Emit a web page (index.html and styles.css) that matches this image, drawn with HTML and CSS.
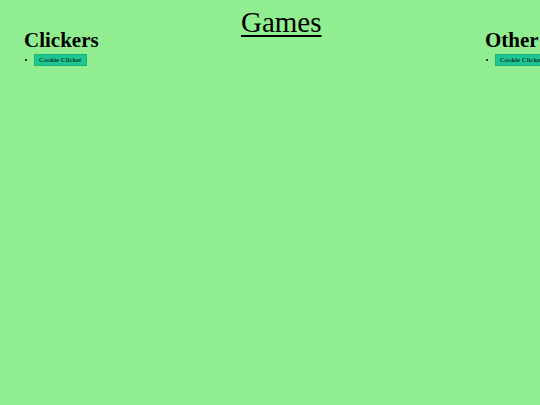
FILE: index.html
```html
<!DOCTYPE html>
<html lang="en">
<head>
<meta charset="utf-8">
<title>Games</title>
<link rel="stylesheet" href="styles.css">
</head>
<body>
<div class="board">
  <section class="col col-left">
    <h2 class="cat">Clickers</h2>
    <ul class="games">
      <li class="game"><button class="game-btn">Cookie Clicker</button></li>
    </ul>
  </section>
  <section class="col col-center">
    <h1 class="title">Games</h1>
  </section>
  <section class="col col-right">
    <h2 class="cat">Other</h2>
    <ul class="games">
      <li class="game"><button class="game-btn">Cookie Clicker</button></li>
    </ul>
  </section>
</div>
</body>
</html>
```

FILE: styles.css
```css
html {
  overflow: hidden;
  background: #90ee90;
}
body {
  margin: 0;
  background: #90ee90;
  font-family: "Liberation Serif", "Times New Roman", serif;
  color: #000;
}
.board {
  display: flex;
  align-items: flex-start;
  padding-left: 24px;
  width: max-content;
}
.col-left {
  flex: 0 0 217px;
}
.col-center {
  flex: 0 0 244px;
}
.col-right {
  flex: 0 0 120px;
}
.title {
  margin: 6px 0 0;
  font-size: 29px;
  font-weight: normal;
  text-decoration: underline;
  text-decoration-thickness: 2px;
  text-underline-offset: 3px;
  line-height: normal;
}
.cat {
  margin: 28px 0 0;
  font-size: 21px;
  font-weight: bold;
  line-height: normal;
}
.games {
  margin: 1px 0 0;
  padding-left: 1px;
  list-style: none;
}
.game {
  display: flex;
  align-items: center;
}
.game::before {
  content: "";
  width: 2px;
  height: 2px;
  border-radius: 50%;
  background: #000;
  margin-right: 7px;
}
.game-btn {
  font-family: "Liberation Serif", "Times New Roman", serif;
  font-size: 7px;
  line-height: 8px;
  padding: 1px 4px;
  border: 1px solid #17b482;
  background: #1dc690;
  color: #000;
  cursor: pointer;
}
```
